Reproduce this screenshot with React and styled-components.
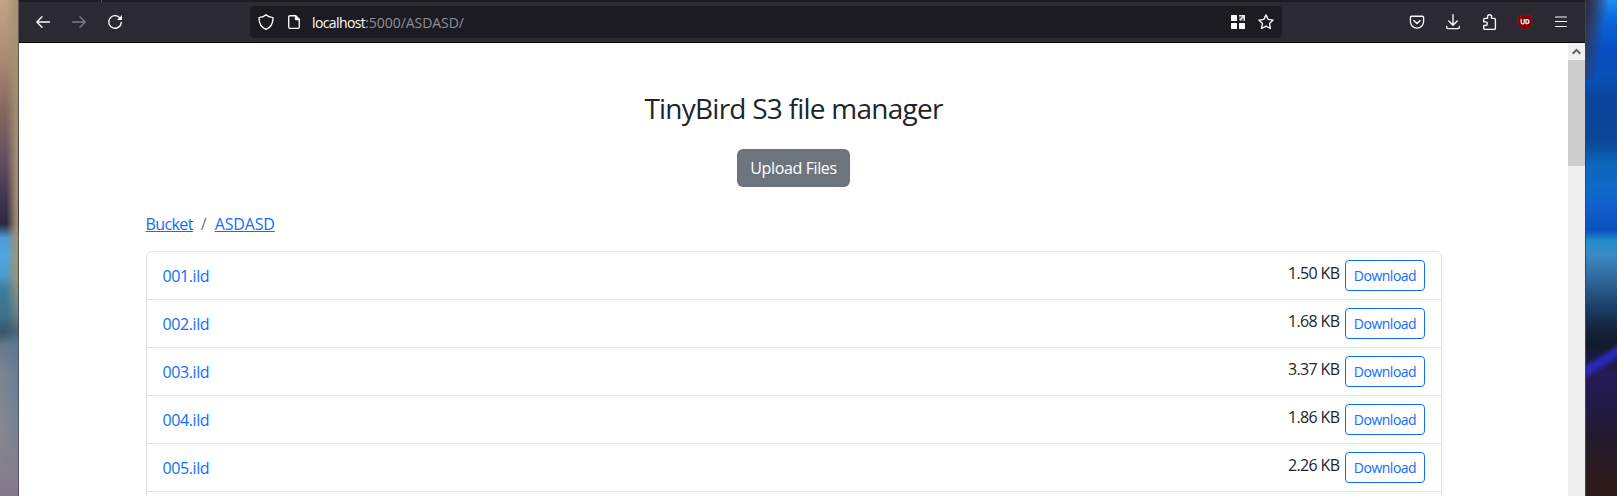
import React from "react";
import styled, { createGlobalStyle } from "styled-components";

const GlobalStyle = createGlobalStyle`
  *, *::before, *::after { box-sizing: border-box; }
  html, body { margin: 0; height: 496px; overflow: hidden; }
  body {
    font-family: "Segoe UI", "Open Sans", "Noto Sans", sans-serif;
    font-size: 16px;
    line-height: 24px;
    color: #212529;
  }
  button { font-family: inherit; cursor: pointer; }
`;

const Desktop = styled.div`
  display: flex;
  width: 1617px;
  height: 496px;
  overflow: hidden;
`;

const WallpaperLeft = styled.div`
  flex: 0 0 19px;
  position: relative;
  border-right: 1px solid rgba(70, 70, 70, 0.75);
  background: linear-gradient(180deg, #c2a584 0, #a98a72 60px, #85675f 110px, #634f60 160px, #43364f 195px,
      #2b2740 224px, #4d9bd6 238px, #4fa5e3 255px, #4a9cd0 275px, #3e7f9f 288px, #3b718c 315px,
      #39566a 333px, #67788a 345px, #7b8590 375px, #85878f 430px, #85798c 496px);
  &::before {
    content: "";
    position: absolute;
    inset: 0 0 auto 0;
    height: 350px;
    background: linear-gradient(90deg, transparent 35%, rgba(164, 144, 112, 0.95) 90%);
    mask-image: linear-gradient(180deg, #000 275px, transparent 345px);
  }
  &::after {
    content: "";
    position: absolute;
    inset: 325px 0 0 0;
    background: linear-gradient(90deg, transparent 20%, rgba(88, 120, 158, 0.8) 100%);
    mask-image: linear-gradient(180deg, transparent 0, #000 20px, transparent 150px);
  }
`;

const WallpaperRight = styled.div`
  flex: 0 0 32px;
  border-left: 1px solid #3b4350;
  background:
    linear-gradient(100deg, #2a2a3c 0, rgba(47, 58, 100, 0.9) 22%, transparent 52%) 0 0 / 100% 80px no-repeat,
    linear-gradient(148deg, transparent 36%, #2b28b8 46%, #2b28b8 52%, transparent 64%) 0 338px / 100% 48px no-repeat,
    linear-gradient(180deg, #1e8df2 0, #0868dc 18px, #084dc2 50px, #0a50b8 75px, #08459b 100px,
      #094796 140px, #0c66bd 165px, #0f69c5 185px, #115fce 205px, #0a51bd 230px, #218fca 241px,
      #3b89c4 255px, #2e689b 280px, #1c426b 305px, #132338 330px, #121b2e 345px, #251b55 375px,
      #221a48 405px, #211a2d 435px, #2c1a1e 475px, #2b1a19 496px);
`;

const BrowserWindow = styled.div`
  flex: 1;
  display: flex;
  flex-direction: column;
  min-width: 0;
  background: #fff;
`;

const TabStrip = styled.div`
  flex: 0 0 2px;
  padding-left: 82px;
  background: #1c1b22;
`;

const TabDivider = styled.div`
  width: 1px;
  height: 2px;
  background: #5b5a62;
`;

const Toolbar = styled.div`
  flex: 0 0 41px;
  display: flex;
  align-items: center;
  padding: 0 16px 1px;
  background: #2b2a33;
  border-bottom: 1px solid #0c0c0d;
  color: #fbfbfe;
`;

const IconRow = styled.div`
  display: flex;
  align-items: center;
  gap: ${(p) => p.$gap}px;
  margin-left: ${(p) => (p.$trailing ? "auto" : 0)};
`;

const Icon = styled.svg`
  display: block;
  flex: none;
  width: 16px;
  height: 16px;
  fill: none;
  stroke: currentColor;
  stroke-width: 1.35;
  stroke-linecap: round;
  stroke-linejoin: round;
  opacity: ${(p) => (p.$dim ? 0.4 : 1)};
`;

const AddressBar = styled.div`
  display: flex;
  align-items: center;
  width: 1032px;
  height: 32px;
  margin-left: 127px;
  padding: 0 8px;
  border-radius: 4px;
  background: #1c1b22;
`;

const Url = styled.div`
  flex: 1;
  margin-left: 10px;
  padding-top: 2px;
  font-size: 14px;
  letter-spacing: -0.06px;
  line-height: 20px;
  color: #8f8f95;
`;

const UrlHost = styled.span`
  color: #fbfbfe;
  letter-spacing: -0.6px;
`;

const Viewport = styled.div`
  flex: 1;
  display: flex;
  min-height: 0;
`;

const Page = styled.main`
  flex: 1;
  display: flex;
  flex-direction: column;
  align-items: center;
  overflow: hidden;
`;

const Title = styled.h3`
  margin: 48px 0 24px;
  font-size: 28px;
  font-weight: 400;
  line-height: 34px;
  letter-spacing: -0.76px;
  white-space: nowrap;
`;

const UploadButton = styled.button`
  flex: none;
  width: 113px;
  height: 38px;
  padding: 0;
  border: 0;
  border-radius: 6px;
  background: #6c757d;
  color: #fff;
  font-size: 16px;
  line-height: 24px;
  letter-spacing: -0.37px;
  white-space: nowrap;
`;

const Container = styled.div`
  flex: none;
  width: 1296px;
`;

const Breadcrumb = styled.nav`
  display: flex;
  gap: 8px;
  margin: 25px 0 15px;
  color: #6c757d;
`;

const Crumb = styled.a`
  color: #0d6efd;
  letter-spacing: ${(p) => p.$tracking}px;
  text-decoration: underline;
  text-underline-offset: 1px;
  text-decoration-thickness: 1px;
`;

const FileList = styled.ul`
  min-height: 290px;
  margin: 0;
  padding: 0;
  list-style: none;
  border: 1px solid #dee2e6;
  border-radius: 6px;
`;

const FileRow = styled.li`
  display: flex;
  justify-content: space-between;
  align-items: center;
  height: 48px;
  padding: 0 16px;
  border-bottom: 1px solid #dee2e6;
`;

const FileLink = styled.a`
  color: #0d6efd;
  letter-spacing: -0.4px;
`;

const FileActions = styled.div`
  display: flex;
  align-items: flex-start;
  gap: 5px;
  height: 31px;
`;

const FileSize = styled.span`
  padding-top: 1px;
  letter-spacing: -0.62px;
  white-space: nowrap;
`;

const DownloadButton = styled.button`
  width: 80px;
  height: 31px;
  padding: 0 0 0 1px;
  border: 1px solid #0d6efd;
  border-radius: 4px;
  background: #fff;
  color: #0d6efd;
  font-size: 14px;
  line-height: 21px;
  letter-spacing: -0.5px;
`;

const Scrollbar = styled.div`
  flex: 0 0 17px;
  background: #f0f0f0;
`;

const ScrollUp = styled.div`
  display: flex;
  align-items: center;
  justify-content: center;
  height: 17px;
  color: #606060;
`;

const ScrollThumb = styled.div`
  height: 106px;
  background: #cdcdcd;
`;

const files = [
  ["001.ild", "1.50 KB"],
  ["002.ild", "1.68 KB"],
  ["003.ild", "3.37 KB"],
  ["004.ild", "1.86 KB"],
  ["005.ild", "2.26 KB"],
];

const BackIcon = () => (
  <Icon viewBox="0 0 16 16"><path d="M14.5 8H2M7 2.8 1.8 8 7 13.2" /></Icon>
);
const ForwardIcon = () => (
  <Icon viewBox="0 0 16 16" $dim><path d="M1.5 8H14M9 2.8 14.2 8 9 13.2" /></Icon>
);
const ReloadIcon = () => (
  <Icon viewBox="0 0 16 16">
    <path d="M12.6 3.6A6.3 6.3 0 1 0 14.3 8.4" />
    <path d="M15 1v4.5a.5.5 0 0 1-.5.5H10z" fill="currentColor" stroke="none" />
  </Icon>
);
const ShieldIcon = () => (
  <Icon viewBox="0 0 16 16">
    <path d="M8 .8C6.3 2.4 4.2 3.2 1.7 3.4c-.5 0-.7.3-.7.8C1.1 9.6 3 13.4 8 15.4c5-2 6.9-5.8 7-11.2 0-.5-.2-.8-.7-.8C11.8 3.2 9.7 2.4 8 .8z" />
  </Icon>
);
const DocumentIcon = () => (
  <Icon viewBox="0 0 16 16">
    <path d="M9.5 1.7H4A1.3 1.3 0 0 0 2.7 3v10A1.3 1.3 0 0 0 4 14.3h8A1.3 1.3 0 0 0 13.3 13V5.5" />
    <path d="M9.5 1.6V5a.5.5 0 0 0 .5.5h3.4z" fill="currentColor" />
  </Icon>
);
const GridIcon = () => (
  <Icon viewBox="0 0 16 16">
    <g fill="currentColor" stroke="none">
      <rect x="1" y="1" width="6" height="6" rx=".5" />
      <rect x="1" y="9" width="6" height="6" rx=".5" />
      <rect x="9" y="9" width="6" height="6" rx=".5" />
      <path d="M9 1h6v6h-1.500V3.700L10.300 7 9 5.700 12.300 2.500H9z" opacity=".9" />
      <path d="M9 2.500h3.300L9 5.700zM13.500 3.700V7h-3.200z" opacity=".25" />
    </g>
  </Icon>
);
const StarIcon = () => (
  <Icon viewBox="0 0 16 16">
    <path d="m8 .9 2.15 4.45 4.95.7-3.6 3.45.9 5L8 12.15 3.6 14.5l.9-5L.9 6.05l4.95-.7z" />
  </Icon>
);
const PocketIcon = () => (
  <Icon viewBox="0 0 16 16">
    <path d="M2.7 2.2h10.6c.8 0 1.3.5 1.3 1.3V7.5a6.6 6.6 0 0 1-13.2 0V3.5c0-.8.5-1.3 1.3-1.3z" />
    <path d="m4.8 6.6 3.2 3 3.2-3" />
  </Icon>
);
const DownloadIcon = () => (
  <Icon viewBox="0 0 16 16">
    <path d="M8 .7v10.3M3.8 7 8 11.2 12.2 7M1.7 12.5v.8c0 .8.5 1.3 1.3 1.3h10c.8 0 1.3-.5 1.3-1.3v-.8" />
  </Icon>
);
const PuzzleIcon = () => (
  <Icon viewBox="0 0 16 16">
    <path d="M2.7 7.8V5.5c0-.7.5-1.2 1.2-1.2h2.7V2.7a2 2 0 0 1 4 0v1.6h2.6c.7 0 1.2.5 1.2 1.2v8.7c0 .7-.5 1.2-1.2 1.2H3.9c-.7 0-1.2-.5-1.2-1.2v-2.7h1.7a1.85 1.85 0 0 0 0-3.7z" />
  </Icon>
);
const BlockerIcon = () => (
  <Icon viewBox="0 0 16 16">
    <path d="M8 .2c1.8 1.3 4 1.9 6.9 2v7.3c0 3-3.4 4.6-6.9 6.4C4.5 14.1 1.1 12.5 1.1 9.5V2.2C4 2.1 6.2 1.5 8 .2z" fill="#800000" stroke="#8d2a2c" strokeWidth=".5" />
    <path d="M4.2 5.4v3a1.5 1.5 0 0 0 3 0v-3M9 5.5h.9a2 2 0 0 1 0 4.2H9z" strokeWidth="1.25" />
  </Icon>
);
const MenuIcon = () => (
  <Icon viewBox="0 0 16 16"><path d="M2.5 3h11M2.500 7.500h11M2.500 12.500h11" strokeWidth="1.2" /></Icon>
);

export default function App() {
  return (
    <>
      <GlobalStyle />
      <Desktop>
        <WallpaperLeft />
        <BrowserWindow>
          <TabStrip><TabDivider /></TabStrip>
          <Toolbar>
            <IconRow $gap={20}>
              <BackIcon />
              <ForwardIcon />
              <ReloadIcon />
            </IconRow>
            <AddressBar>
              <IconRow $gap={12}>
                <ShieldIcon />
                <DocumentIcon />
              </IconRow>
              <Url><UrlHost>localhost</UrlHost>:5000/ASDASD/</Url>
              <IconRow $gap={12}>
                <GridIcon />
                <StarIcon />
              </IconRow>
            </AddressBar>
            <IconRow $gap={20} $trailing>
              <PocketIcon />
              <DownloadIcon />
              <PuzzleIcon />
              <BlockerIcon />
              <MenuIcon />
            </IconRow>
          </Toolbar>
          <Viewport>
            <Page>
              <Title>TinyBird S3 file manager</Title>
              <UploadButton>Upload Files</UploadButton>
              <Container>
                <Breadcrumb>
                  <Crumb $tracking={-0.6}>Bucket</Crumb>
                  <span>/</span>
                  <Crumb $tracking={-0.15}>ASDASD</Crumb>
                </Breadcrumb>
                <FileList>
                  {files.map(([name, size]) => (
                    <FileRow key={name}>
                      <FileLink>{name}</FileLink>
                      <FileActions>
                        <FileSize>{size}</FileSize>
                        <DownloadButton>Download</DownloadButton>
                      </FileActions>
                    </FileRow>
                  ))}
                </FileList>
              </Container>
            </Page>
            <Scrollbar>
              <ScrollUp>
                <svg width="9" height="7" viewBox="0 0 9 7" fill="none" stroke="currentColor" strokeWidth="2">
                  <path d="M.7 5.7 4.5 1.9 8.3 5.7" />
                </svg>
              </ScrollUp>
              <ScrollThumb />
            </Scrollbar>
          </Viewport>
        </BrowserWindow>
        <WallpaperRight />
      </Desktop>
    </>
  );
}
